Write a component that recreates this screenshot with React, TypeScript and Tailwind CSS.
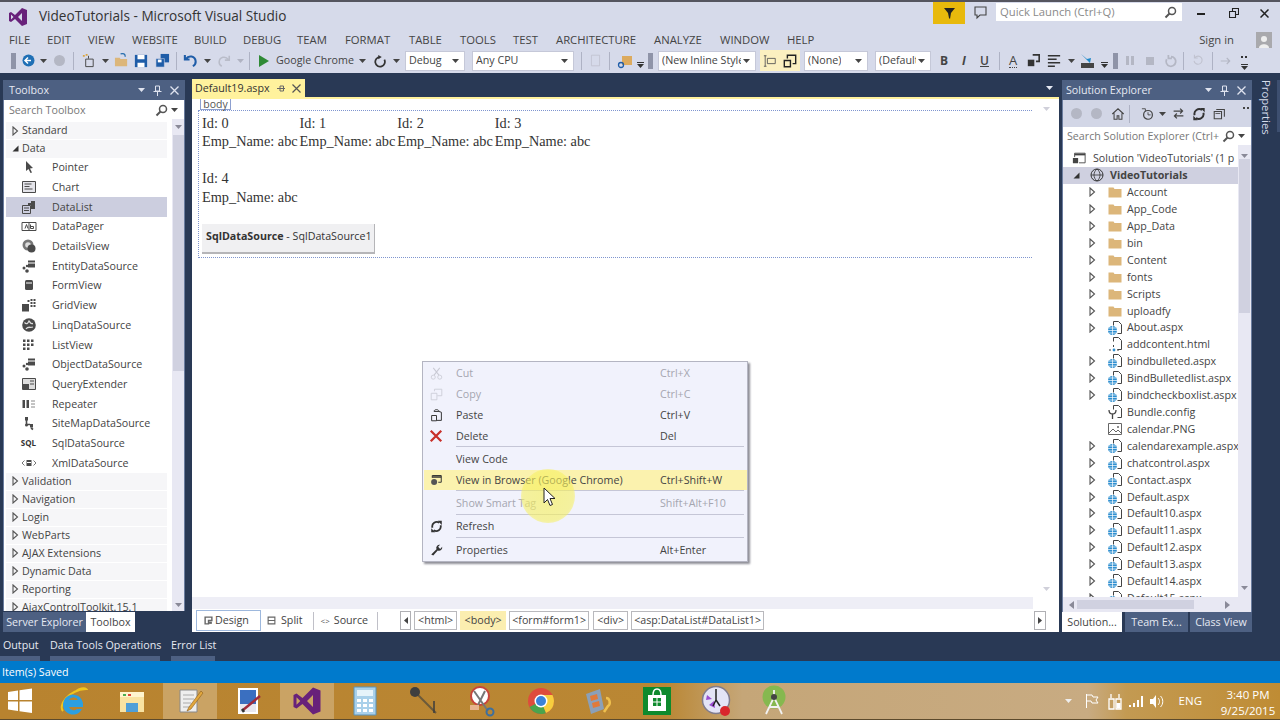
import type { ReactNode } from "react";

const toolboxItems = [
  ["Pointer", "pointer"],
  ["Chart", "chart"],
  ["DataList", "datalist"],
  ["DataPager", "pager"],
  ["DetailsView", "details"],
  ["EntityDataSource", "source"],
  ["FormView", "form"],
  ["GridView", "grid"],
  ["LinqDataSource", "linq"],
  ["ListView", "list"],
  ["ObjectDataSource", "source"],
  ["QueryExtender", "query"],
  ["Repeater", "repeater"],
  ["SiteMapDataSource", "sitemap"],
  ["SqlDataSource", "sql"],
  ["XmlDataSource", "xml"],
];

const toolboxGroups = ["Validation", "Navigation", "Login", "WebParts", "AJAX Extensions", "Dynamic Data", "Reporting", "AjaxControlToolkit.15.1"];

const files = [
  ["Account", "folder", true],
  ["App_Code", "folder", true],
  ["App_Data", "folder", true],
  ["bin", "folder", true],
  ["Content", "folder", true],
  ["fonts", "folder", true],
  ["Scripts", "folder", true],
  ["uploadfy", "folder", true],
  ["About.aspx", "aspx", true],
  ["addcontent.html", "html", false],
  ["bindbulleted.aspx", "aspx", true],
  ["BindBulletedlist.aspx", "aspx", true],
  ["bindcheckboxlist.aspx", "aspx", true],
  ["Bundle.config", "config", false],
  ["calendar.PNG", "image", false],
  ["calendarexample.aspx", "aspx", true],
  ["chatcontrol.aspx", "aspx", true],
  ["Contact.aspx", "aspx", true],
  ["Default.aspx", "aspx", true],
  ["Default10.aspx", "aspx", true],
  ["Default11.aspx", "aspx", true],
  ["Default12.aspx", "aspx", true],
  ["Default13.aspx", "aspx", true],
  ["Default14.aspx", "aspx", true],
  ["Default15.aspx", "aspx", true],
] as const;

function Caret({ color = "#444" }: { color?: string }) {
  return (
    <svg className="shrink-0" width="7" height="4" viewBox="0 0 7 4">
      <path d="M0 0h7L3.5 4z" fill={color} />
    </svg>
  );
}

function OpenArrow() {
  return (
    <svg className="shrink-0" width="7" height="10" viewBox="0 0 7 10">
      <path d="M1 1l4.500 4L1 9z" fill="none" stroke="#555" strokeWidth="1.100" />
    </svg>
  );
}

function DownArrow() {
  return (
    <svg className="shrink-0" width="7" height="7" viewBox="0 0 7 7">
      <path d="M6.500 .5v6h-6z" fill="#333" />
    </svg>
  );
}

function Grip() {
  return <div className="h-[16px] w-[5px] bg-[radial-gradient(#8f94a8_1px,transparent_1px)] bg-[length:2px_2px]" />;
}

function Sep({ className }: { className: string }) {
  return (
    <div className={`flex shrink-0 justify-center ${className}`}>
      <div className="h-[18px] w-px bg-[#aeb2c4]" />
    </div>
  );
}

function Cell({ className, children }: { className: string; children?: ReactNode }) {
  return <div className={`flex shrink-0 items-center justify-center ${className}`}>{children}</div>;
}

function Combo({ className, label }: { className: string; label: string }) {
  return (
    <div className={`flex h-[20px] shrink-0 items-center justify-between border border-[#c5c8d8] bg-white pl-[3px] pr-[5px] ${className}`}>
      <span className="overflow-hidden whitespace-nowrap">{label}</span>
      <span className="ml-[2px] shrink-0">
        <Caret />
      </span>
    </div>
  );
}

function Svg16({ children, size = 16 }: { children: ReactNode; size?: number }) {
  return (
    <svg className="shrink-0" width={size} height={size} viewBox="0 0 16 16">
      {children}
    </svg>
  );
}

function VsLogo({ size = 20 }: { size?: number }) {
  return (
    <svg width={size} height={size} viewBox="0 0 20 20">
      <path d="M14 1l5 2v14l-5 2-7-7-4 3-2-1V6l2-1 4 3zM3 7.500v5L5.500 10zM14 6l-4 4 4 4z" fill="#68217a" fillRule="evenodd" />
    </svg>
  );
}

function ToolboxIcon({ name }: { name: string }) {
  const c = "#4a4a4a";
  if (name === "pointer") return <Svg16><path d="M5 2l7 7-3 .5 2 4-1.500.5-2-4L5 12z" fill={c} /></Svg16>;
  if (name === "chart") return <Svg16><path d="M1.500 2.500h13v11h-13z" fill="#e4e4ea" stroke={c} /><path d="M3.500 5h7M3.500 7.500h5M3.500 10h8" stroke={c} strokeWidth="1.200" /></Svg16>;
  if (name === "datalist") return <Svg16><path d="M1.500 6.500h8v8h-8z" fill="none" stroke={c} /><path d="M3 9h5M3 11.500h5" stroke={c} /><path d="M10 2h4v8h-4z" fill={c} /><path d="M7 4h3v2H7z" fill={c} /></Svg16>;
  if (name === "pager") return <Svg16><path d="M1 4.500h14v8H1z" fill="none" stroke={c} /><path d="M8 4v9" stroke={c} /><path d="M4 10.500L5.500 6.500 7 10.500M9.500 6.500v4h3v-2h-3" fill="none" stroke={c} /></Svg16>;
  if (name === "details") return <Svg16><circle cx="7" cy="7" r="5.500" fill="#777" /><circle cx="7" cy="7" r="2.800" fill="#ddd" /><circle cx="10.500" cy="10.500" r="4" fill={c} /></Svg16>;
  if (name === "source") return <Svg16><path d="M7 2.500h7v7H7z" fill={c} /><path d="M7 5h7" stroke="#fff" /><circle cx="3" cy="10" r="1.500" fill={c} /><circle cx="6" cy="13" r="1.800" fill={c} /><circle cx="6" cy="8" r="1.200" fill={c} /></Svg16>;
  if (name === "form") return <Svg16><rect x="4" y="3" width="8" height="10" rx="1.500" fill={c} /><path d="M5 6h6" stroke="#fff" /></Svg16>;
  if (name === "grid") return <Svg16><path d="M1 7h7v7.500H1z" fill={c} /><path d="M9.500 2h2v2h-2zM12.500 2h2v2h-2zM9.500 5h2v2h-2zM12.500 5h2v2h-2zM9.500 8h2v2h-2zM12.500 8h2v2h-2zM6.500 3h2v2h-2z" fill={c} /></Svg16>;
  if (name === "linq") return <Svg16><circle cx="8" cy="8" r="6.800" fill={c} /><path d="M3.500 5.500C6 8 7 6 8 4c2 2 1 3 4 2.500M5 12c2-3 4-1 7-2" stroke="#ddd" strokeWidth="1.300" fill="none" /></Svg16>;
  if (name === "list") return <Svg16><path d="M2 2.500h2.500V5H2zM6 2.500h2.500V5H6zM10 2.500h2.500V5H10zM2 6.500h2.500V9H2zM6 6.500h2.500V9H6zM10 6.500h2.500V9H10zM2 10.500h2.500V13H2zM6 10.500h2.500V13H6z" fill={c} /></Svg16>;
  if (name === "query") return <Svg16><path d="M1.500 2.500h13v11h-13z" fill="#ddd" stroke={c} /><path d="M2 8h6v5H2z" fill={c} /><path d="M9 5h4M9 8h4" stroke={c} /></Svg16>;
  if (name === "repeater") return <Svg16><path d="M1.500 4h2.500v8H1.500zM5.500 4H8v8H5.500z" fill={c} /><path d="M10 5h4M10 8h4M10 11h4" stroke="#888" /></Svg16>;
  if (name === "sitemap") return <Svg16><path d="M4 2h3v3.500H4zM9 9h3v3.500H9z" fill={c} /><path d="M5.500 5v4.500H9" stroke={c} strokeWidth="1.600" fill="none" /><circle cx="5.500" cy="10" r="1.500" fill={c} /><path d="M10 13l2 1.500" stroke={c} strokeWidth="1.600" /></Svg16>;
  if (name === "sql") return <span className="text-[8px] font-bold leading-none text-[#333]">SQL</span>;
  return <Svg16><path d="M5.500 5h5v6h-5z" fill={c} /><path d="M6 7.500h4" stroke="#fff" /><path d="M3.500 5.500L1 8l2.500 2.500M12.500 5.500L15 8l-2.500 2.500" fill="none" stroke="#777" /></Svg16>;
}

function TreeIcon({ name }: { name: string }) {
  if (name === "folder") {
    return <Svg16><path d="M1.500 3.500h5l1 1.500h7v8.500h-13z" fill="#dcb67a" /></Svg16>;
  }
  const page = <path d="M6.500 1.500h5l3 3v9h-4M6.500 1.500v4" fill="none" stroke="#444" />;
  if (name === "aspx") {
    return (
      <Svg16>
        {page}
        <circle cx="5.500" cy="10.500" r="4.500" fill="#2f8fd0" />
        <path d="M1 10.500h9M5.500 6v9M2 8h7M2 13h7" stroke="#fff" strokeWidth=".7" />
      </Svg16>
    );
  }
  if (name === "html") {
    return <Svg16>{page}<path d="M6.500 9v2M2 14h2" stroke="#444" /><circle cx="7" cy="14" r="1.400" fill="#2f8fd0" /><path d="M10 14h2" stroke="#444" /></Svg16>;
  }
  if (name === "config") {
    return <Svg16>{page}<path d="M2 6c0 3 2 4 3.500 4s3.500-1 3.500-4M5.500 10v5" fill="none" stroke="#444" strokeWidth="1.300" /></Svg16>;
  }
  return <Svg16><path d="M1.500 2.500h13v11h-13z" fill="none" stroke="#666" /><path d="M2 12l4-4 3 3 2-2 3 3" fill="none" stroke="#666" /><circle cx="11" cy="6" r="1" fill="#666" /></Svg16>;
}

function SearchGlass() {
  return (
    <svg className="shrink-0" width="13" height="13" viewBox="0 0 13 13">
      <circle cx="8" cy="5" r="3.500" fill="none" stroke="#555" strokeWidth="1.500" />
      <path d="M5.500 7.500L1.500 11.500" stroke="#555" strokeWidth="2" />
    </svg>
  );
}

function PanelButtons() {
  return (
    <span className="flex items-center gap-[8px]">
      <Caret color="#dfe3ef" />
      <svg width="9" height="11" viewBox="0 0 9 11">
        <path d="M2.500 1h4v5h-4zM.5 6.500h8M4.500 6.500V11" fill="none" stroke="#dfe3ef" />
      </svg>
      <svg width="9" height="9" viewBox="0 0 9 9">
        <path d="M.5.5l8 8M8.500.5l-8 8" stroke="#dfe3ef" strokeWidth="1.300" />
      </svg>
    </span>
  );
}

function Group({ label }: { label: string }) {
  return (
    <div className="flex h-[18px] items-center border-b border-white bg-[#f6f6f8] pl-[6px]">
      <OpenArrow />
      <span className="ml-[3px] whitespace-nowrap">{label}</span>
    </div>
  );
}

function ToolboxPanel() {
  return (
    <div className="mt-px flex w-[182px] shrink-0 flex-col">
      <div className="flex h-[20px] items-center justify-between bg-[#4d6082] px-[6px] text-[#e6e9f2]">
        <span>Toolbox</span>
        <PanelButtons />
      </div>
      <div className="flex h-[19px] items-center justify-between border-x border-[#6b7d9f] bg-white pl-[5px] pr-[6px] pt-px text-[#777]">
        <span>Search Toolbox</span>
        <span className="flex items-center gap-[3px]">
          <SearchGlass />
          <Caret />
        </span>
      </div>
      <div className="flex h-[492px] overflow-hidden border-x border-[#6b7d9f] bg-white">
        <div className="w-[168px] shrink-0 pl-[2px] pr-[5px] pt-[3px]">
          <Group label="Standard" />
          <div className="flex h-[17.500px] items-center bg-[#f6f6f8] pb-px pl-[6px]">
            <DownArrow />
            <span className="ml-[3px]">Data</span>
          </div>
          {toolboxItems.map(([label, icon]) => (
            <div key={label} className={`flex h-[19.700px] items-center ${label === "DataList" ? "bg-[#cccedf]" : ""}`}>
              <span className="flex w-[39px] shrink-0 justify-center pl-[6px]">
                <ToolboxIcon name={icon} />
              </span>
              <span className="ml-[7px]">{label}</span>
            </div>
          ))}
          {toolboxGroups.map((label) => (
            <Group key={label} label={label} />
          ))}
        </div>
        <div className="flex w-[12px] flex-col items-center bg-[#e8e8f3]">
          <div className="flex h-[16px] items-center">
            <Caret color="#8a8a98" />
          </div>
          <div className="h-[236px] w-[11px] bg-[#d0d1e0]" />
          <div className="mt-auto pb-[4px]">
            <Caret color="#8a8a98" />
          </div>
        </div>
      </div>
      <div className="mt-px flex h-[20px]">
        <div className="flex w-[83px] items-center justify-center bg-[#4d6082] text-[#e6e9f2]">Server Explorer</div>
        <div className="flex w-[49px] items-center justify-center bg-white">Toolbox</div>
      </div>
    </div>
  );
}

function Crumb({ label, className }: { label: string; className: string }) {
  return <div className={`flex h-[19px] shrink-0 items-center justify-center border-[1.500px] border-[#b9b9bd] whitespace-nowrap ${className}`}>{label}</div>;
}

function Editor() {
  return (
    <div className="ml-[7px] flex w-[867px] shrink-0 flex-col">
      <div className="flex h-[18px] shrink-0 items-center justify-between">
        <div className="flex h-full w-[113px] items-center bg-[#fff29d] pl-[3px] pt-px text-[#333]">
          <span>Default19.aspx</span>
          <span className="ml-[6px] text-[#666]">
            <svg width="10" height="9" viewBox="0 0 10 9">
              <path d="M1 4.500h3M4 2v5h3.500V2zM4 4.500h5" fill="none" stroke="#666" />
            </svg>
          </span>
          <svg className="ml-[6px] shrink-0" width="9" height="9" viewBox="0 0 9 9">
            <path d="M.5.5l8 8M8.500.5l-8 8" stroke="#555" strokeWidth="1.200" />
          </svg>
        </div>
        <span className="mr-[6px]">
          <Caret color="#e6e9f2" />
        </span>
      </div>
      <div className="h-[2px] shrink-0 bg-[#fff29d]" />
      <div className="flex min-h-0 flex-1 flex-col bg-white">
        <div className="flex min-h-0 flex-1">
          <div className="flex min-w-0 flex-1 flex-col">
            <div className="flex-1 pl-[6px]">
              <div className="ml-[2px] flex h-[11px] w-[31px] items-center justify-center border-x border-b border-[#8da0d0] text-[10.500px] leading-none text-[#555]">body</div>
              <div className="h-[148px] w-[836px] border border-dotted border-[#7f95cf] pl-[3px] pt-[2.500px] font-['Liberation_Serif',serif] text-[14.300px] leading-[18.500px] text-[#333]">
                <div className="flex">
                  {[0, 1, 2, 3].map((n) => (
                    <div key={n} className="w-[97.600px] shrink-0 whitespace-nowrap">
                      <div>Id: {n}</div>
                      <div>Emp_Name: abc</div>
                    </div>
                  ))}
                </div>
                <div className="mt-[18.500px]">
                  <div>Id: 4</div>
                  <div>Emp_Name: abc</div>
                </div>
                <div className="mt-[18px] flex h-[30px] w-[173px] items-center border-b-2 border-r border-[#b5b5b8] bg-[#f0f0f2] pb-[3px] pl-[4px] font-['Open_Sans',sans-serif] text-[10.700px] leading-none">
                  <b className="font-bold">SqlDataSource</b>
                  <span className="whitespace-pre"> - SqlDataSource1</span>
                </div>
              </div>
            </div>
            <div className="h-[12px] shrink-0 bg-[#eeeef6]" />
          </div>
          <div className="flex w-[26px] shrink-0 flex-col items-center justify-between bg-white pb-[18px] pt-[8px]">
            <Caret color="#d0d0da" />
            <Caret color="#d0d0da" />
          </div>
        </div>
        <div className="flex h-[23px] shrink-0 items-center">
          <div className="ml-[4px] flex h-[21px] w-[65px] shrink-0 items-center border border-[#9db8dd] pl-[7px]">
            <Svg16 size={9}>
              <path d="M2 2h12v6H8v6H2z" fill="none" stroke="#666" strokeWidth="2.500" />
              <path d="M9 10h5v4H9z" fill="#666" />
            </Svg16>
            <span className="ml-[2px]">Design</span>
          </div>
          <span className="ml-[4px] flex w-[12px] shrink-0 justify-center">
            <Svg16 size={9}>
              <path d="M2 2h12v12H2zM2 8h12" fill="none" stroke="#666" strokeWidth="2" />
            </Svg16>
          </span>
          <span className="ml-[4px]">Split</span>
          <div className="ml-[10px] h-[18px] w-px bg-[#c0c0c8]" />
          <span className="ml-[7px] text-[8px] leading-none text-[#555]">&lt;&gt;</span>
          <span className="ml-[4px]">Source</span>
          <div className="ml-[9px] h-[18px] w-px bg-[#c0c0c8]" />
          <div className="ml-[22px] flex h-[19px] w-[11px] shrink-0 items-center justify-center border border-[#b0b0b4]">
            <svg width="4" height="7" viewBox="0 0 4 7">
              <path d="M4 0v7L0 3.500z" fill="#444" />
            </svg>
          </div>
          <Crumb label="<html>" className="ml-[3px] w-[43px]" />
          <div className="ml-[3px] flex h-[19px] w-[46px] shrink-0 items-center justify-center bg-[#fbeeb0]">&lt;body&gt;</div>
          <Crumb label="<form#form1>" className="ml-[3px] w-[80px]" />
          <Crumb label="<div>" className="ml-[4px] w-[35px]" />
          <Crumb label="<asp:DataList#DataList1>" className="ml-[3px] w-[133px]" />
          <div className="ml-auto mr-[13px] flex h-[19px] w-[12px] shrink-0 items-center justify-center border border-[#b0b0b4]">
            <svg width="4" height="7" viewBox="0 0 4 7">
              <path d="M0 0v7l4-3.500z" fill="#444" />
            </svg>
          </div>
        </div>
      </div>
    </div>
  );
}

function RefreshIcon({ size = 14 }: { size?: number }) {
  return (
    <Svg16 size={size}>
      <path d="M3 9.500A5.500 5.500 0 0 1 11.500 3.500M13 6.500A5.500 5.500 0 0 1 4.500 12.500" fill="none" stroke="#333" strokeWidth="2.200" />
      <path d="M9.500 1h5v5zM6.500 15h-5v-5z" fill="#333" />
    </Svg16>
  );
}

function SolutionPanel() {
  return (
    <div className="ml-[3px] mt-px flex w-[190px] shrink-0 flex-col">
      <div className="flex h-[20px] items-center justify-between bg-[#4d6082] pl-[4px] pr-[6px] text-[#e6e9f2]">
        <span>Solution Explorer</span>
        <PanelButtons />
      </div>
      <div className="flex h-[27px] items-center border-x border-[#6b7d9f] bg-[#d2d6e6] pl-[3px]">
        <Cell className="w-[20px]"><span className="h-[11px] w-[11px] rounded-full bg-[#b4b7c4]" /></Cell>
        <Cell className="w-[20px]"><span className="h-[11px] w-[11px] rounded-full bg-[#b4b7c4]" /></Cell>
        <Cell className="w-[23px]">
          <Svg16 size={14}>
            <path d="M1.500 8L8 2l6.500 6M3.500 7v7h3.500v-4h2v4h3.500V7" fill="none" stroke="#444" strokeWidth="1.200" />
          </Svg16>
        </Cell>
        <div className="mr-[9px] h-[18px] w-px bg-[#aeb2c4]" />
        <Cell className="w-[18px]">
          <Svg16 size={14}>
            <circle cx="8" cy="9" r="5" fill="none" stroke="#444" strokeWidth="1.400" />
            <path d="M8 6v3h3M1 2h4v3" fill="none" stroke="#444" />
          </Svg16>
        </Cell>
        <Cell className="w-[10px]"><Caret /></Cell>
        <Cell className="w-[22px]">
          <Svg16 size={13}>
            <path d="M2 5h11M10 2l3 3-3 3M14 11H3M6 8l-3 3 3 3" fill="none" stroke="#444" strokeWidth="1.500" />
          </Svg16>
        </Cell>
        <Cell className="w-[20px]">
          <RefreshIcon />
        </Cell>
        <Cell className="w-[20px]">
          <Svg16 size={13}>
            <path d="M1.500 5.500h9v9h-9zM4 3h10v9" fill="none" stroke="#444" strokeWidth="1.300" />
            <path d="M3 8h6" stroke="#444" />
          </Svg16>
        </Cell>
        <Cell className="mb-[12px] ml-[13px] w-[8px]">
          <svg width="6" height="2" viewBox="0 0 6 2"><path d="M0 0h2v2H0zM4 0h2v2H4z" fill="#444" /></svg>
        </Cell>
      </div>
      <div className="flex h-[18px] items-center justify-between border-x border-[#6b7d9f] bg-white pl-[4px] pr-[6px] text-[#777]">
        <span className="whitespace-nowrap">Search Solution Explorer (Ctrl+</span>
        <span className="flex items-center gap-[3px]">
          <SearchGlass />
          <Caret />
        </span>
      </div>
      <div className="flex h-[452px] overflow-hidden border-x border-[#6b7d9f] bg-white">
        <div className="w-[175px] shrink-0 overflow-hidden pt-[5px]">
          <div className="flex h-[16.920px] items-center whitespace-nowrap pl-[9px]">
            <Svg16 size={14}>
              <path d="M3 7V2.500h12v11H8" fill="none" stroke="#444" />
              <path d="M3 3h12v2H3z" fill="#444" />
              <path d="M1 8h6v6H1z" fill="#444" />
            </Svg16>
            <span className="ml-[7px]">Solution &apos;VideoTutorials&apos; (1 p</span>
          </div>
          <div className="flex h-[16.920px] items-center bg-[#cfd0e0] pl-[10px]">
            <DownArrow />
            <span className="ml-[10px] shrink-0">
              <svg className="block" width="14" height="14" viewBox="0 0 14 14">
                <circle cx="7" cy="7" r="6" fill="none" stroke="#333" />
                <path d="M1 7h12M7 1c-4 3-4 9 0 12M7 1c4 3 4 9 0 12" fill="none" stroke="#333" strokeWidth=".8" />
              </svg>
            </span>
            <span className="ml-[6px] font-bold">VideoTutorials</span>
          </div>
          {files.map(([label, icon, hasArrow]) => (
            <div key={label} className="flex h-[16.920px] items-center whitespace-nowrap pl-[26px]">
              <span className="flex w-[18px] shrink-0">{hasArrow && <OpenArrow />}</span>
              <TreeIcon name={icon} />
              <span className="ml-[4px]">{label}</span>
            </div>
          ))}
        </div>
        <div className="flex w-[13px] flex-col items-center bg-[#e8e8f3]">
          <div className="flex h-[13px] items-end"><Caret color="#8a8a98" /></div>
          <div className="mt-[1px] h-[154px] w-[11px] bg-[#d0d1e0]" />
          <div className="mt-auto pb-[7px]"><Caret color="#8a8a98" /></div>
        </div>
      </div>
      <div className="flex h-[15px] items-center border-x border-[#6b7d9f] bg-[#e8e8f3] pl-[6px]">
        <svg width="5" height="8" viewBox="0 0 5 8"><path d="M5 0v8L0 4z" fill="#8a8a98" /></svg>
        <div className="ml-[3px] h-[9px] w-[117px] bg-[#d0d1e0]" />
        <svg className="ml-[31px]" width="5" height="8" viewBox="0 0 5 8"><path d="M0 0v8l5-4z" fill="#8a8a98" /></svg>
      </div>
      <div className="flex h-[20px]">
        <div className="flex w-[60px] items-center justify-center bg-white">Solution...</div>
        <div className="ml-[3px] flex w-[63px] items-center justify-center bg-[#4d6082] text-[#e6e9f2]">Team Ex...</div>
        <div className="ml-[2px] flex w-[62px] items-center justify-center bg-[#4d6082] text-[#e6e9f2]">Class View</div>
      </div>
    </div>
  );
}

function MenuRow({ label, keys, icon, off, className = "h-[21px]" }: { label: string; keys?: string; icon?: ReactNode; off?: boolean; className?: string }) {
  return (
    <div className={`flex items-center ${className} ${off ? "text-[#a5a6b0]" : "text-[#444]"}`}>
      <span className="flex w-[32px] shrink-0 justify-center pr-[8px]">{icon}</span>
      <span className="w-[204px] shrink-0 whitespace-nowrap">{label}</span>
      <span className="whitespace-nowrap">{keys}</span>
    </div>
  );
}

function MenuSep() {
  return <div className="ml-[32px] mr-[3px] h-px bg-[#c5c6d6]" />;
}

function ContextMenu() {
  return (
    <div className="absolute left-[422px] top-[359px] h-[201px] w-[326px] border border-[#b4b5c2] bg-[#f1f2fc] pl-px pt-[1px] shadow-[2px_2px_2px_#8f8f98]">
      <MenuRow
        label="Cut"
        keys="Ctrl+X"
        off
        icon={
          <Svg16 size={13}>
            <path d="M4 1l7 9M12 1L5 10" stroke="#c9cad4" strokeWidth="1.300" />
            <circle cx="4" cy="12.500" r="2.500" fill="none" stroke="#c9cad4" />
            <circle cx="12" cy="12.500" r="2.500" fill="none" stroke="#c9cad4" />
          </Svg16>
        }
      />
      <MenuRow
        label="Copy"
        keys="Ctrl+C"
        off
        icon={
          <Svg16 size={13}>
            <path d="M1.500 6.500h7v8h-7zM5.500 4V1.500h9v8H9" fill="none" stroke="#c9cad4" />
          </Svg16>
        }
      />
      <MenuRow
        label="Paste"
        keys="Ctrl+V"
        icon={
          <Svg16 size={13}>
            <path d="M5 3h6l3 1v10H8M2 8v6.500h6V8zM5 3c0-3 6-3 6 0" fill="none" stroke="#333" strokeWidth="1.200" />
          </Svg16>
        }
      />
      <MenuRow
        label="Delete"
        keys="Del"
        className="h-[20px]"
        icon={
          <Svg16 size={14}>
            <path d="M2 2l12 12M14 2L2 14" stroke="#c8302a" strokeWidth="2.600" />
          </Svg16>
        }
      />
      <MenuSep />
      <MenuRow label="View Code" className="mt-[2px] h-[21px]" />
      <MenuRow
        label="View in Browser (Google Chrome)"
        keys="Ctrl+Shift+W"
        className="h-[20px] bg-[#fbf2ae]"
        icon={
          <Svg16 size={12}>
            <path d="M3 5V2h12v9h-4" fill="none" stroke="#333" strokeWidth="1.300" />
            <path d="M3 3h12v2H3z" fill="#333" />
            <circle cx="5.500" cy="10.500" r="4" fill="#555" />
          </Svg16>
        }
      />
      <MenuSep />
      <MenuRow label="Show Smart Tag" keys="Shift+Alt+F10" off className="mt-[2px] h-[21px]" />
      <MenuSep />
      <MenuRow label="Refresh" className="mt-px h-[21px]" icon={<RefreshIcon size={13} />} />
      <MenuSep />
      <MenuRow
        label="Properties"
        keys="Alt+Enter"
        className="mt-[2px] h-[21px]"
        icon={
          <Svg16 size={13}>
            <path d="M15 3.500a4 4 0 0 1-5.500 4.500L4 14l-2.500-1L8 6.500A4 4 0 0 1 12.500 1L10 3.500 12.500 6z" fill="#333" />
          </Svg16>
        }
      />
    </div>
  );
}

function TaskTile({ active, children }: { active?: boolean; children: ReactNode }) {
  return (
    <div className={`flex h-[36px] w-[54px] shrink-0 items-center justify-center ${active ? "bg-white/25" : ""}`}>
      {children}
    </div>
  );
}

function Taskbar() {
  return (
    <div className="flex h-[37px] shrink-0 items-center border-b border-[#5c4a2c] bg-[linear-gradient(90deg,#b8832f_0%,#ba8734_52%,#c5a678_58%,#c8ab82_85%,#c39a52_88%,#bf8c34_100%)]">
      <div className="flex w-[800px] shrink-0 items-center gap-[4.400px]">
        <div className="mr-[2px] flex h-[36px] w-[40px] shrink-0 items-center justify-center">
          <svg width="26" height="26" viewBox="0 0 26 26">
            <path d="M1 4l10-1.500V12H1zM12.500 2.300L25 .5V12H12.500zM1 13.500h10V23L1 21.500zM12.500 13.500H25V25L12.500 23.300z" fill="#fff" />
          </svg>
        </div>
        <TaskTile>
          <svg width="30" height="30" viewBox="0 0 30 30">
            <path d="M5 25C0 20 10 4 28 3c-2-2-7 0-10 2" fill="none" stroke="#f0c51e" strokeWidth="2" />
            <path d="M25 18a10 10 0 1 0-1 5h-5a5 5 0 0 1-8-2h14zM11 14a5 5 0 0 1 9 0z" fill="#2c9fe0" fillRule="evenodd" />
          </svg>
        </TaskTile>
        <TaskTile>
          <svg width="28" height="28" viewBox="0 0 28 28">
            <path d="M2 5h24v20H2z" fill="#f9e3a2" />
            <path d="M2 5h24v5H2z" fill="#fff5cf" />
            <path d="M8 16h12v9H8z" fill="#4f9fd8" />
            <path d="M5 7h3v2H5z" fill="#4caf50" />
            <path d="M10 7h3v2h-3z" fill="#e0463a" />
          </svg>
        </TaskTile>
        <TaskTile active>
          <svg width="28" height="28" viewBox="0 0 28 28">
            <path d="M4 3h17v22H4z" fill="#eee" stroke="#888" />
            <path d="M7 8h11M7 12h11M7 16h8M7 20h8" stroke="#aaa" />
            <path d="M25 4L13 20l-2 4 4-2L27 6z" fill="#e2a73d" stroke="#8a5a1a" strokeWidth=".6" />
          </svg>
        </TaskTile>
        <TaskTile>
          <svg width="28" height="28" viewBox="0 0 28 28">
            <path d="M3 1h20v26H3z" fill="#fff" />
            <path d="M5 3h16v14H5z" fill="#3a6fc0" />
            <path d="M5 17h16v8H5z" fill="#e8e8f0" />
            <path d="M25 9L8 23" stroke="#a02c3c" strokeWidth="2.500" />
            <path d="M7 22l2 3" stroke="#333" strokeWidth="2.500" />
          </svg>
        </TaskTile>
        <TaskTile active>
          <VsLogo size={30} />
        </TaskTile>
        <TaskTile>
          <svg width="24" height="30" viewBox="0 0 24 30">
            <path d="M1 1h22v28H1z" fill="#a9d0ea" stroke="#5b93b8" />
            <path d="M4 4h16v6H4z" fill="#e6f3fa" />
            <path d="M4 13h4v3H4zM10 13h4v3h-4zM16 13h4v3h-4zM4 18h4v3H4zM10 18h4v3h-4zM16 18h4v3h-4zM4 23h4v3H4zM10 23h4v3h-4zM16 23h4v3h-4z" fill="#fff" />
          </svg>
        </TaskTile>
        <TaskTile>
          <svg width="32" height="32" viewBox="0 0 32 32">
            <path d="M9 9l19 19" stroke="#6b5a3a" strokeWidth="2" />
            <path d="M26 16v12" stroke="#3d3d3d" strokeWidth="1.500" />
            <circle cx="7" cy="7" r="5" fill="#3f3f3f" />
          </svg>
        </TaskTile>
        <TaskTile>
          <svg width="30" height="32" viewBox="0 0 30 32">
            <circle cx="13" cy="11" r="9" fill="#fff" stroke="#c8443c" strokeWidth="2" />
            <path d="M7 6l14 20M18 6L11 20" stroke="#777" strokeWidth="2" />
            <circle cx="23" cy="27" r="3.500" fill="none" stroke="#3c6f9f" strokeWidth="2" />
            <path d="M3 20h9v5H3z" fill="#e8b48f" />
          </svg>
        </TaskTile>
        <TaskTile>
          <svg width="28" height="28" viewBox="0 0 28 28">
            <circle cx="14" cy="14" r="13" fill="#de4c3c" />
            <path d="M14 14L2.500 20A13 13 0 0 0 14 27c2 0 3.500-.4 5-1z" fill="#4aa44c" />
            <path d="M14 14l5 12A13 13 0 0 0 27 14c0-2-.5-4-1.500-6H14z" fill="#f7ce3e" />
            <circle cx="14" cy="14" r="6.500" fill="#fff" />
            <circle cx="14" cy="14" r="5" fill="#3b82d9" />
          </svg>
        </TaskTile>
        <TaskTile>
          <svg width="30" height="30" viewBox="0 0 30 30">
            <path d="M2 8l14-5 4 20-13 5z" fill="#8ba0b8" />
            <path d="M6 10l7-2 1 5-7 2zM8 17l7-2 1 5-7 2z" fill="#e07a3a" />
            <path d="M22 12c4 0 5 6 2 8l-4 6" fill="none" stroke="#efc04e" strokeWidth="2.500" />
          </svg>
        </TaskTile>
        <TaskTile>
          <svg width="28" height="30" viewBox="0 0 28 30">
            <path d="M0 1h28v28H0z" fill="#0e8a2d" />
            <path d="M5 9h18v16H5z" fill="#fff" />
            <path d="M10 9c0-8 8-8 8 0" fill="none" stroke="#fff" strokeWidth="1.500" />
            <path d="M10 12h3.500v3.500H10zM14.500 12H18v3.500h-3.500zM10 16.500h3.500V20H10zM14.500 16.500H18V20h-3.500z" fill="#0e8a2d" />
          </svg>
        </TaskTile>
        <TaskTile>
          <svg width="30" height="32" viewBox="0 0 30 32">
            <circle cx="15" cy="15" r="13.500" fill="#e3e4f6" stroke="#807c8c" strokeWidth="1.500" />
            <path d="M6 10l5 4-6 1zM8 20l5-4 1 7z" fill="#9a4dd0" />
            <path d="M15 4v11l4 6M15 15l-3 6" stroke="#222" strokeWidth="1.500" fill="none" />
            <circle cx="24" cy="26" r="5" fill="#d9262c" />
          </svg>
        </TaskTile>
        <TaskTile>
          <svg width="28" height="32" viewBox="0 0 28 32">
            <circle cx="14" cy="12" r="11.500" fill="#86b84f" />
            <path d="M14 5v9M6 29l8-17 8 17M10 22h8" fill="none" stroke="#f2f2f2" strokeWidth="1.800" />
            <circle cx="14" cy="12" r="3" fill="#444" />
          </svg>
        </TaskTile>
      </div>
      <div className="ml-auto flex items-center pr-[3px]">
        <Caret color="#eee" />
        <svg className="ml-[13px]" width="14" height="16" viewBox="0 0 14 16"><path d="M1.500 1v14M2 2h5l1 2h5l-2 3 2 3H7l-1-2H2" fill="none" stroke="#fff" /></svg>
        <svg className="ml-[9px]" width="14" height="18" viewBox="0 0 14 18"><path d="M1 7h5v10H1zM8 7h5v10H8zM3 2v4M11 2v4" fill="none" stroke="#fff" strokeWidth="1.300" /><path d="M8.500 11h4v5.500h-4z" fill="#fff" /></svg>
        <svg className="ml-[6px]" width="16" height="12" viewBox="0 0 16 12"><path d="M1 10h2v2H1zM5 8h2v4H5zM9 5h2v7H9zM13 1h2v11h-2z" fill="#fff" /></svg>
        <svg className="ml-[5px]" width="15" height="15" viewBox="0 0 15 15"><path d="M1 5h3l3-4v13l-3-4H1z" fill="#fff" /><path d="M9 4c2 2 2 5 0 7M11.500 2c3 3 3 8 0 11" fill="none" stroke="#fff" /></svg>
        <span className="ml-[15px] text-[11.500px] text-white">ENG</span>
        <div className="ml-[17px] w-[58px] pt-[3px] text-center text-[11.500px] leading-[16px] text-white">
          <div>3:40 PM</div>
          <div>9/25/2015</div>
        </div>
      </div>
    </div>
  );
}

export default function App() {
  return (
    <div className="relative flex h-[720px] w-[1280px] flex-col overflow-hidden border-t-2 border-[#55555f] bg-[#d6daea] font-['Open_Sans',sans-serif] text-[10.700px] text-[#444]">
      <div className="flex h-[28px] shrink-0 items-start">
        <div className="ml-[8px] mt-[5px]">
          <VsLogo />
        </div>
        <div className="ml-[11px] mt-[5px] whitespace-nowrap text-[13.600px] leading-[18px] text-[#333]">VideoTutorials - Microsoft Visual Studio</div>
        <div className="ml-auto flex items-start">
          <div className="flex h-[22px] w-[32px] items-center justify-center bg-[#e8b90c]">
            <svg width="11" height="11" viewBox="0 0 11 11">
              <path d="M0 0h11L7 5l-1 6-1-1-1-5z" fill="#222" />
            </svg>
          </div>
          <div className="flex h-[22px] w-[31px] items-center justify-center">
            <svg width="15" height="14" viewBox="0 0 15 14">
              <path d="M2 1h11v8H7l-3 3V9H2z" fill="none" stroke="#444" strokeWidth="1.100" />
            </svg>
          </div>
          <div className="mt-[1px] flex h-[18px] w-[186px] items-center justify-between bg-white pl-[4px] pr-[5px] text-[11.300px] text-[#8a8a8a]">
            <span>Quick Launch (Ctrl+Q)</span>
            <SearchGlass />
          </div>
          <Cell className="ml-[2px] h-[22px] w-[33px]"><span className="mt-[2px] h-[2px] w-[8px] bg-[#222]" /></Cell>
          <Cell className="h-[22px] w-[33px]">
            <svg width="10" height="10" viewBox="0 0 10 10"><path d="M.5 3.500h6v6h-6zM3.500 3V.5h6v6H7" fill="none" stroke="#222" strokeWidth="1.100" /></svg>
          </Cell>
          <Cell className="h-[22px] w-[30px] pr-[2px]">
            <svg width="9" height="9" viewBox="0 0 9 9"><path d="M.5.5l8 8M8.500.5l-8 8" stroke="#222" strokeWidth="1.500" /></svg>
          </Cell>
        </div>
      </div>

      <div className="flex h-[20px] shrink-0 items-center pl-[9px] pr-[8px] text-[11.300px]">
        <span className="w-[38px]">FILE</span>
        <span className="w-[41px]">EDIT</span>
        <span className="w-[44px]">VIEW</span>
        <span className="w-[62px]">WEBSITE</span>
        <span className="w-[49px]">BUILD</span>
        <span className="w-[54px]">DEBUG</span>
        <span className="w-[48px]">TEAM</span>
        <span className="w-[64px]">FORMAT</span>
        <span className="w-[51px]">TABLE</span>
        <span className="w-[53px]">TOOLS</span>
        <span className="w-[43px]">TEST</span>
        <span className="w-[98px]">ARCHITECTURE</span>
        <span className="w-[66px]">ANALYZE</span>
        <span className="w-[67px]">WINDOW</span>
        <span>HELP</span>
        <span className="ml-auto">Sign in</span>
        <span className="ml-[22px] flex h-[16px] w-[16px] items-end justify-center bg-[#a9a9ad]">
          <svg width="14" height="14" viewBox="0 0 14 14"><circle cx="7" cy="5" r="3" fill="#eee" /><path d="M2 14c0-5 10-5 10 0z" fill="#eee" /></svg>
        </span>
      </div>

      <div className="flex h-[23px] shrink-0 items-center pb-[2px] pl-[6px]">
        <Cell className="w-[14px]"><Grip /></Cell>
        <Cell className="w-[16px]">
          <svg width="13" height="13" viewBox="0 0 13 13"><circle cx="6.500" cy="6.500" r="6" fill="#1f6fb5" /><path d="M3 6.500h6M6 3.500l-3 3 3 3" fill="none" stroke="#fff" strokeWidth="1.500" /></svg>
        </Cell>
        <Cell className="w-[14px]"><Caret /></Cell>
        <Cell className="w-[18px]"><span className="h-[11px] w-[11px] rounded-full bg-[#b4b7c4]" /></Cell>
        <Sep className="w-[10px]" />
        <Cell className="w-[20px]">
          <Svg16 size={15}>
            <path d="M5 6.500h8v8H5zM8 3v3" fill="none" stroke="#444" />
            <path d="M2 2h2v2H2zM5 1h2v2H5z" fill="#d9a441" />
          </Svg16>
        </Cell>
        <Cell className="w-[14px]"><Caret /></Cell>
        <Cell className="w-[18px]">
          <Svg16 size={15}>
            <path d="M1 5h5l1 1.500h7V14H1z" fill="#dcb67a" />
            <path d="M7 1c3-1 5 0 5 3" fill="none" stroke="#2a70b0" strokeWidth="1.400" />
          </Svg16>
        </Cell>
        <Cell className="w-[22px]">
          <Svg16 size={14}>
            <path d="M1 1h14v14H1z" fill="#1f5da8" />
            <path d="M4 1h8v5H4zM4 10h8v5H4z" fill="#fff" />
          </Svg16>
        </Cell>
        <Cell className="w-[20px]">
          <Svg16 size={15}>
            <path d="M6 1h9v9H6z" fill="#1f5da8" />
            <path d="M1 6h9v9H1z" fill="#1f5da8" stroke="#d6daea" strokeWidth=".6" />
            <path d="M3 7h4v3H3z" fill="#fff" />
          </Svg16>
        </Cell>
        <Sep className="w-[8px]" />
        <Cell className="w-[20px]">
          <Svg16 size={15}>
            <path d="M2 2v5h5M3 6.500C6 2 13 3 13.500 9c.2 2-1 4-3 5" fill="none" stroke="#1f5da8" strokeWidth="2.200" />
          </Svg16>
        </Cell>
        <Cell className="w-[14px]"><Caret /></Cell>
        <Cell className="w-[20px]">
          <Svg16 size={14}>
            <path d="M14 2v5H9M13 6.500C10 2 3 3 2.500 9c-.2 2 1 4 3 5" fill="none" stroke="#b9bcc9" strokeWidth="1.800" />
          </Svg16>
        </Cell>
        <Cell className="w-[12px]"><Caret color="#b0b3c2" /></Cell>
        <Sep className="w-[6px]" />
        <Cell className="w-[24px]">
          <svg width="10" height="12" viewBox="0 0 10 12"><path d="M0 0l10 6-10 6z" fill="#2f8a36" /></svg>
        </Cell>
        <span className="w-[80px] shrink-0 whitespace-nowrap">Google Chrome</span>
        <Cell className="w-[12px]"><Caret /></Cell>
        <Cell className="w-[24px]">
          <Svg16 size={14}>
            <path d="M8 3.500a5.500 5.500 0 1 0 5 3" fill="none" stroke="#333" strokeWidth="2" />
            <path d="M6 1v5l4-2.500z" fill="#333" />
          </Svg16>
        </Cell>
        <Cell className="w-[8px]"><Caret /></Cell>
        <Combo className="ml-[5px] w-[60px]" label="Debug" />
        <Combo className="ml-[7px] w-[102px]" label="Any CPU" />
        <Sep className="w-[14px]" />
        <Cell className="w-[14px]">
          <Svg16 size={13}><path d="M3 1.500h10v13H3z" fill="none" stroke="#c0c2cf" /></Svg16>
        </Cell>
        <Sep className="w-[14px]" />
        <Cell className="w-[18px]">
          <Svg16>
            <path d="M5 3h10v9H5z" fill="#dcaa5e" />
            <circle cx="4" cy="12" r="2.500" fill="none" stroke="#1f5da8" strokeWidth="1.300" />
          </Svg16>
        </Cell>
        <Cell className="w-[12px] pt-[8px]">
          <svg width="7" height="6" viewBox="0 0 7 6"><path d="M0 0h7v1H0zM0 2h7L3.500 6z" fill="#333" /></svg>
        </Cell>
        <Cell className="w-[8px]"><Grip /></Cell>
        <Combo className="ml-[4px] w-[98px]" label="(New Inline Style" />
        <Cell className="ml-[4px] h-[21px] w-[20px] bg-[#fbf0c0]">
          <Svg16 size={14}><path d="M1 2h3M2.500 2v12M1 14h3M5 5h9v6H5z" fill="none" stroke="#555" /></Svg16>
        </Cell>
        <Cell className="h-[21px] w-[20px] bg-[#fbf0c0]">
          <Svg16 size={14}><path d="M1.500 7.500h7v7h-7zM5 5V1.500h9.500V11H11" fill="none" stroke="#222" strokeWidth="1.600" /></Svg16>
        </Cell>
        <Combo className="ml-[4px] w-[64px]" label="(None)" />
        <Combo className="ml-[7px] w-[56px]" label="(Default" />
        <Cell className="ml-[3px] w-[20px] text-[12px] font-bold">B</Cell>
        <Cell className="w-[20px] text-[12px] font-bold italic">I</Cell>
        <Cell className="w-[21px] text-[12px] font-semibold underline">U</Cell>
        <Sep className="w-[8px]" />
        <Cell className="w-[20px] text-[13px] leading-none">
          <span className="border-b border-dotted border-[#444]">A</span>
        </Cell>
        <Cell className="w-[20px]">
          <Svg16 size={13}><path d="M1 7h8v8H1z" fill="#333" /><path d="M7 1h8v8h-4" fill="none" stroke="#333" strokeWidth="2" /></Svg16>
        </Cell>
        <Cell className="w-[22px]">
          <Svg16 size={14}><path d="M1 2h14M1 6h10M1 10h14M1 14h8" stroke="#333" strokeWidth="1.500" /></Svg16>
        </Cell>
        <Cell className="w-[12px]"><Caret /></Cell>
        <Cell className="w-[20px]">
          <Svg16>
            <path d="M2 1l6 5 4-1-1 5-5-5" fill="#1e88c8" />
            <path d="M2 10h13v5H2z" fill="#444" />
          </Svg16>
        </Cell>
        <Cell className="w-[14px] pt-[8px]">
          <svg width="7" height="6" viewBox="0 0 7 6"><path d="M0 0h7v1H0zM0 2h7L3.500 6z" fill="#333" /></svg>
        </Cell>
        <Cell className="w-[8px]"><Grip /></Cell>
        <Cell className="w-[22px]">
          <span className="flex gap-[2px]"><span className="h-[9px] w-[3px] bg-[#b4b7c4]" /><span className="h-[9px] w-[3px] bg-[#b4b7c4]" /></span>
        </Cell>
        <Cell className="w-[18px]"><span className="h-[8px] w-[8px] bg-[#b4b7c4]" /></Cell>
        <Cell className="w-[24px]">
          <Svg16 size={14}><path d="M8 3a5.500 5.500 0 1 1-5 3M5 1v4h4" fill="none" stroke="#b4b7c4" strokeWidth="2" /></Svg16>
        </Cell>
        <div className="h-[18px] w-px shrink-0 bg-[#aeb2c4]" />
        <Cell className="w-[28px]">
          <Svg16 size={13}><path d="M3 1v4h4M3.500 4.500a5 5 0 1 1-1 4" fill="none" stroke="#c0c2cf" strokeWidth="1.300" /></Svg16>
        </Cell>
        <div className="h-[18px] w-px shrink-0 bg-[#aeb2c4]" />
        <Cell className="w-[26px]">
          <Svg16 size={12}><path d="M1 8h12M9 4l4 4-4 4" fill="none" stroke="#b4b7c4" strokeWidth="1.500" /></Svg16>
        </Cell>
        <Cell className="w-[10px] pt-[4px]">
          <svg width="7" height="14" viewBox="0 0 7 14"><path d="M0 0h2v2H0zM4 0h2v2H4zM0 8h7v1H0zM0 10h7l-3.500 4z" fill="#333" /></svg>
        </Cell>
      </div>

      <div className="flex min-h-0 flex-1 flex-col bg-[#293955]">
        <div className="flex h-[559px] shrink-0 pl-[3px] pt-[6px]">
          <ToolboxPanel />
          <Editor />
          <SolutionPanel />
          <div className="ml-[5px] flex flex-1 justify-between pt-px">
            <span className="h-[52px] whitespace-nowrap text-[11.300px] text-[#d6dceb] [writing-mode:vertical-rl]">Properties</span>
            <span className="h-[52px] w-[3px] bg-[#3d4f70]" />
          </div>
        </div>
        <div className="flex h-[29px] shrink-0 items-start pt-[4px] text-[#e6e9f2]">
          <div className="w-[40px] border-b-[5px] border-[#4d6082] pb-[2px] pl-[3px] leading-[18px]">Output</div>
          <div className="ml-[10px] w-[110px] whitespace-nowrap border-b-[5px] border-[#4d6082] pb-[2px] leading-[18px]">Data Tools Operations</div>
          <div className="ml-[11px] w-[44px] whitespace-nowrap border-b-[5px] border-[#4d6082] pb-[2px] leading-[18px]">Error List</div>
        </div>
      </div>

      <div className="flex h-[22px] shrink-0 items-center bg-[#007acc] pl-[2px] text-white">Item(s) Saved</div>
      <Taskbar />

      <ContextMenu />
      <div className="pointer-events-none absolute left-[521px] top-[467px] h-[54px] w-[54px] rounded-full bg-[radial-gradient(circle,#f6f05fa8_0%,#f6f05f99_65%,#f6f05f00_100%)]" />
      <svg className="pointer-events-none absolute left-[543px] top-[485px]" width="13" height="20" viewBox="0 0 13 20">
        <path d="M1 1v15l3.500-3.500 2.500 6 2.500-1-2.500-6H12z" fill="#fff" stroke="#222" strokeWidth="1" />
      </svg>
    </div>
  );
}
